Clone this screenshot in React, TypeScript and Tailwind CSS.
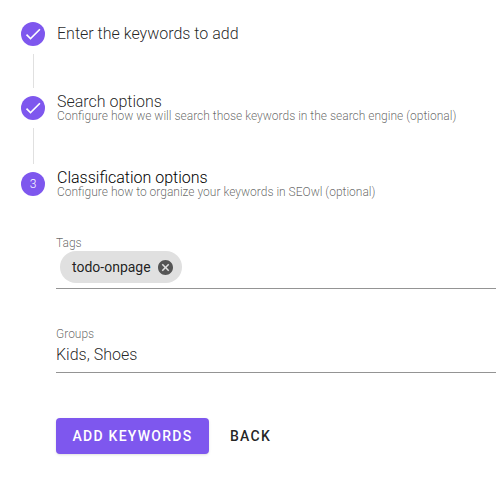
import React from "react";

function Check() {
  return (
    <svg viewBox="0 0 24 24" className="size-5" fill="#fff">
      <path d="M21 7 9 19l-5.500-5.500 1.410-1.410L9 16.170 19.590 5.590z" />
    </svg>
  );
}

function Badge({ children }: { children: React.ReactNode }) {
  return (
    <div className="flex size-6 shrink-0 items-center justify-center rounded-full bg-[#7e57ee] text-xs text-white">
      {children}
    </div>
  );
}

function Step({ badge, title, hint, active }: { badge: React.ReactNode; title: string; hint?: string; active?: boolean }) {
  return (
    <div className="flex h-6 items-center gap-3">
      <Badge>{badge}</Badge>
      <div className="flex flex-col whitespace-nowrap">
        <div className={active ? "text-base leading-4 text-black" : "text-base leading-4 text-black/87"}>{title}</div>
        {hint && <div className="text-xs leading-3 text-black/60">{hint}</div>}
      </div>
    </div>
  );
}

export default function App() {
  return (
    <div className="h-[482px] w-[496px] overflow-hidden bg-white pl-[21px] pt-[22px] font-['Roboto',sans-serif] font-light">
      <Step badge={<Check />} title="Enter the keywords to add" />
      <div className="my-2 ml-3 h-[34px] w-px bg-black/12" />
      <Step badge={<Check />} title="Search options" hint="Configure how we will search those keywords in the search engine (optional)" />
      <div className="my-2 ml-3 h-9 w-px bg-black/12" />
      <Step badge="3" title="Classification options" hint="Configure how to organize your keywords in SEOwl (optional)" active />
      <div className="ml-[35px] mt-10">
        <div className="border-b border-[#949494] pb-[5px]">
          <div className="text-xs leading-[15px] text-black/60">Tags</div>
          <div className="ml-1 flex h-8 w-[122px] items-center justify-between rounded-full bg-[#e0e0e0] pl-3 pr-[9px] text-sm font-normal text-black/87">
            <span>todo-onpage</span>
            <svg viewBox="2 2 20 20" className="size-[15px]" fill="#555">
              <path d="M12 2C6.470 2 2 6.470 2 12s4.470 10 10 10 10-4.470 10-10S17.530 2 12 2zm5 13.590L15.590 17 12 13.410 8.410 17 7 15.590 10.590 12 7 8.410 8.410 7 12 10.590 15.590 7 17 8.410 13.410 12 17 15.590z" />
            </svg>
          </div>
        </div>
        <div className="mt-[38px] border-b border-[#949494] pb-[5px]">
          <div className="text-xs leading-[15px] text-black/60">Groups</div>
          <div className="pt-px text-base leading-6 text-black/87">Kids, Shoes</div>
        </div>
        <div className="mt-[45px] flex gap-1">
          <button className="h-9 w-[153px] rounded bg-[#7e57ee] text-sm font-medium tracking-[1.25px] text-white shadow-sm">ADD KEYWORDS</button>
          <button className="h-9 px-[17px] text-sm font-medium tracking-[1.25px] text-black/87">BACK</button>
        </div>
      </div>
    </div>
  );
}
